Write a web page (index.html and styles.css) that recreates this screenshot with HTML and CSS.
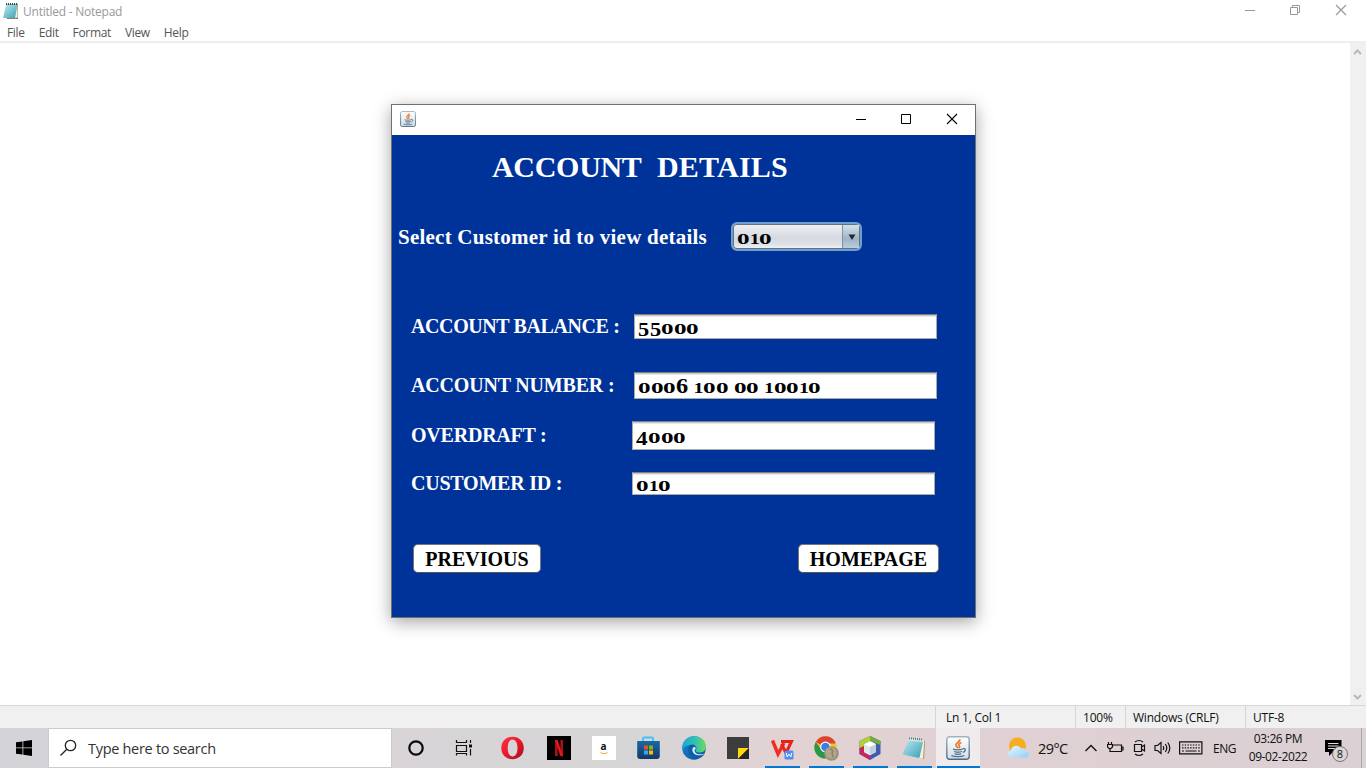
FILE: index.html
```html
<!DOCTYPE html>
<html lang="en">
<head>
<meta charset="utf-8">
<title>Untitled - Notepad</title>
<link rel="stylesheet" href="styles.css">
</head>
<body>
<svg width="0" height="0" class="defs">
  <defs>
    <linearGradient id="btn" x2="0" y2="1"><stop stop-color="#fff"/><stop offset="1" stop-color="#d3dce3"/></linearGradient>
    <linearGradient id="btnEdge" x2="0" y2="1"><stop stop-color="#9db4c6"/><stop offset="1" stop-color="#4a6a85"/></linearGradient>
    <linearGradient id="pad" x1="0" y1="0" x2="1" y2="1"><stop stop-color="#c5edf2"/><stop offset="1" stop-color="#359eb5"/></linearGradient>
    <linearGradient id="opera" x2="1" y2="1"><stop stop-color="#ff3546"/><stop offset=".5" stop-color="#e8192c"/><stop offset="1" stop-color="#a50d1c"/></linearGradient>
    <linearGradient id="bag" x2="0" y2="1"><stop stop-color="#1768ab"/><stop offset="1" stop-color="#173866"/></linearGradient>
    <linearGradient id="edgeTop" x2="1"><stop stop-color="#1aa5dc"/><stop offset=".6" stop-color="#35c5ad"/><stop offset="1" stop-color="#70dc54"/></linearGradient>
    <linearGradient id="edgeLow" x2="1" y2="1"><stop stop-color="#178fd7"/><stop offset="1" stop-color="#0b4c94"/></linearGradient>
    <linearGradient id="cloud" x2="1" y2="1"><stop stop-color="#e8f7ff"/><stop offset="1" stop-color="#91d0f4"/></linearGradient>
    <symbol id="java" viewBox="0 0 24 24">
      <rect x=".8" y=".8" width="22.4" height="22.4" rx="2.6" fill="url(#btn)" stroke="url(#btnEdge)" stroke-width="1.4"/>
      <path d="M13.700 3.300c1 2.500-4.800 3.800-3.600 6.300.4.900 1.500 1.600 1.700 2.700M15.400 6.500c-2.500 1-3.200 2-2.100 3.300.6.800.3 1.600-.4 2.200" fill="none" stroke="#ee792b" stroke-width="1.700"/>
      <path d="M7 13.200c2 .8 7.300.8 9.500 0M8 15.500c2 .8 5.700.8 8 0M8.600 17.700c2 .8 4.600.8 6.600 0M5.400 19.600c3.800 1.500 9.900 1.400 13-.1M16.600 12.700c4-.8 3.200 3 .2 3.600" fill="none" stroke="#50748e" stroke-width="1.300"/>
    </symbol>
    <symbol id="notepad" viewBox="0 0 24 24">
      <path d="M20 4l3 1-1 18-4-1z" fill="#a98d5c"/>
      <path d="M7 2.500 21.500 4 17.500 22 .5 18.500z" fill="url(#pad)"/>
      <path d="M17.500 22 21.500 4l.8.300-1.300 18.500z" fill="#f5f1e5"/>
      <path d="M7 2.500 21.500 4l-.4 2L6.200 4.600z" fill="#d8e9ea"/>
      <path d="M7.500 1.400v2M9.500 1.500v2M11.500 1.700v2M13.500 1.900v2M15.500 2.100v2M17.500 2.300v2M19.500 2.500v2" stroke="#41606b" stroke-width=".8"/>
    </symbol>
  </defs>
</svg>

<main class="notepad">
  <header class="np-title">
    <svg class="np-icon" width="17" height="17" viewBox="0 0 17 17"><path d="M4 2h12v15H5z" fill="#8d8258"/><path d="M4 2.500h11.500L13 16H1z" fill="url(#pad)"/><path d="M13 16l2.500-13.500v13z" fill="#eef3ee"/><path d="M4.500 1v2M6.500 1v2M8.500 1v2M10.500 1v2M12.500 1v2M14.500 1v2" stroke="#33505a"/></svg>
    <span class="np-name">Untitled - Notepad</span>
    <div class="np-controls">
      <svg width="46" height="22"><path d="M19 10.500h10" stroke="#999" fill="none"/></svg>
      <svg width="46" height="22"><path d="M18.500 7.500h7v7h-7zM20.500 7.500v-2h7v7h-2" stroke="#999" fill="none"/></svg>
      <svg width="46" height="22"><path d="M18 5l10 10M28 5l-10 10" stroke="#999" stroke-width="1.200" fill="none"/></svg>
    </div>
  </header>
  <nav class="np-menu"><span>File</span><span>Edit</span><span>Format</span><span>View</span><span>Help</span></nav>
  <section class="np-body">
    <div class="np-page"></div>
    <div class="np-scroll">
      <svg width="16" height="17"><path d="M4 11 7.500 7.500 11 11" stroke="#b8b8b8" stroke-width="2" fill="none"/></svg>
      <svg width="16" height="17"><path d="M4 7l3.500 3.500L11 7" stroke="#b8b8b8" stroke-width="2" fill="none"/></svg>
    </div>
  </section>
  <footer class="np-status">
    <span class="st-pos">Ln 1, Col 1</span><span class="st-zoom">100%</span><span class="st-eol">Windows (CRLF)</span><span class="st-enc">UTF-8</span>
  </footer>
</main>

<section class="dialog">
  <header class="dlg-title">
    <svg class="dlg-icon" width="16" height="16"><use href="#java"/></svg>
    <div class="dlg-controls">
      <svg width="46" height="30"><path d="M19 14.500h10" stroke="#000" fill="none"/></svg>
      <svg width="46" height="30"><path d="M18.500 9.500h9v9h-9z" stroke="#000" fill="none"/></svg>
      <svg width="46" height="30"><path d="M18 9l10 10M28 9 18 19" stroke="#000" stroke-width="1.100" fill="none"/></svg>
    </div>
  </header>
  <div class="dlg-body">
    <h1><span>ACCOUNT</span>&nbsp; DETAILS</h1>
    <div class="pick">
      <label>Select Customer id to view details</label>
      <div class="combo"><div class="value"><i class="d0">0</i><i class="d1">1</i><i class="d0">0</i></div><div class="arrow"><svg width="17" height="25"><path d="M5.500 9.500h7L9 15z" fill="#222a30"/></svg></div></div>
    </div>
    <div class="field f-balance"><label>ACCOUNT BALANCE :</label><div class="input"><div class="value"><i class="d5">5</i><i class="d5">5</i><i class="d0">0</i><i class="d0">0</i><i class="d0">0</i></div></div></div>
    <div class="field f-number"><label>ACCOUNT NUMBER :</label><div class="input"><div class="value"><i class="d0">0</i><i class="d0">0</i><i class="d0">0</i><i class="d6">6</i> <i class="d1">1</i><i class="d0">0</i><i class="d0">0</i> <i class="d0">0</i><i class="d0">0</i> <i class="d1">1</i><i class="d0">0</i><i class="d0">0</i><i class="d1">1</i><i class="d0">0</i></div></div></div>
    <div class="field f-over"><label>OVERDRAFT :</label><div class="input"><div class="value"><i class="d4">4</i><i class="d0">0</i><i class="d0">0</i><i class="d0">0</i></div></div></div>
    <div class="field f-id"><label>CUSTOMER ID :</label><div class="input"><div class="value"><i class="d0">0</i><i class="d1">1</i><i class="d0">0</i></div></div></div>
    <div class="actions"><button class="b-prev">PREVIOUS</button><button class="b-home">HOMEPAGE</button></div>
  </div>
</section>

<footer class="taskbar">
  <div class="start"><svg width="16" height="16"><path d="M0 2.300 6.500 1.400v6.100H0zM7.300 1.300 16 0v7.500H7.300zM0 8.300h6.500v6.300L0 13.700zM7.300 8.300H16V16l-8.700-1.300z"/></svg></div>
  <div class="search">
    <svg width="18" height="18" fill="none" stroke="#222" stroke-width="1.300"><circle cx="10.500" cy="6.500" r="5.200"/><path d="M6.800 10.200.5 16.500"/></svg>
    <span>Type here to search</span>
  </div>
  <div class="apps">
    <div class="app wide"><svg width="24" height="24"><circle cx="12" cy="12" r="6.700" fill="none" stroke="#0a0a0a" stroke-width="2.200"/></svg></div>
    <div class="app wide"><svg width="24" height="24" fill="none" stroke="#111" stroke-width="1.200"><path d="M4.500 4v2.500h10V4M4.500 9.500h10v6h-10zM4.500 19.500V17.500h10v2M18.500 4v3M18.500 13v6.500"/><path d="M17 8.500h3v3h-3z" fill="#111" stroke="none"/></svg></div>
    <div class="app wide"><svg width="24" height="24"><path fill-rule="evenodd" fill="url(#opera)" d="M12.500.8c6.600 0 11.300 4.700 11.300 11.200s-4.700 11.200-11.300 11.200S1.300 18.500 1.300 12 5.900.8 12.500.8zm0 2.700c-3 0-4.800 3.500-4.800 8.500s1.800 8.500 4.800 8.500 5-3.500 5-8.500-2-8.500-5-8.500z"/></svg></div>
    <div class="app mid"><svg width="24" height="24"><path d="M0 0h24v24H0z" fill="#000"/><path d="M8 4h2.700v16L8 20.300zM13.400 4H16v16.300l-2.600-.3z" fill="#a6111a"/><path d="M8 4h2.700L16 20.300l-2.700-.3z" fill="#e31522"/></svg></div>
    <div class="app mid"><div class="amazon">a<svg width="8" height="3"><path d="M.500.500c2 1.500 5 1.500 7 0" fill="none" stroke="#f5a52c"/></svg></div></div>
    <div class="app mid"><svg width="24" height="24"><path d="M6 6V2.500q0-1 1-1h8q1 0 1 1V6" fill="none" stroke="#45c3f5" stroke-width="1.800"/><path d="M.2 5h22.600v15q0 3-3 3H3.200q-3 0-3-3z" fill="url(#bag)"/><path fill="#f25022" d="M7 9.500h4v4H7z"/><path fill="#7fba00" d="M12 9.500h4v4h-4z"/><path fill="#35a9ee" d="M7 14.500h4v4H7z"/><path fill="#ffb900" d="M12 14.500h4v4h-4z"/></svg></div>
    <div class="app mid"><svg class="edge" width="24" height="24"><circle cx="12" cy="12" r="11.800" fill="url(#edgeLow)"/><path d="M.3 11C1 4.500 6 .2 12 .2 19 .2 24 5 24 10.500c0 4-3 6-6.500 6-3 0-4.500-1.200-3.500-2.800 1.200-2 0-5-4-5C5 8.700 1.500 11 .3 14z" fill="url(#edgeTop)"/><path d="M10.500 8.600C5 9 4 18 11.500 22c5 1.500 9-.8 11.300-4.400-3.300 1.600-8.500 1.600-10.300-1-1.400-2-.3-3.500.8-4.500.3-2-1-3.300-2.800-3.500z" fill="#0d60a8"/><path d="M10.800 12c-1.500 3 1 7.300 6 7.200 2.700 0 4.800-.8 6-1.800-2.300 1-7.300 1.500-9.300-.6-1.500-1.600-1-3 .2-4 .3-2-2.200-2.400-2.900-.8z" fill="#e5edf1"/></svg></div>
    <div class="app near"><svg width="22" height="22"><path d="M0 0h22v22H0z" fill="#3c3c3c"/><path d="M11 22V11h11z" fill="#ffda0a"/><path d="M11 22h11V11z" fill="#262626"/></svg></div>
    <div class="app run"><svg width="24" height="24"><path d="M2.500 4.500 8 18l6-11" fill="none" stroke="#f02d20" stroke-width="3.400"/><path d="M11 5.500h10.500L16 17 11.500 8" fill="none" stroke="#e92018" stroke-width="3"/><rect x="14.500" y="14.500" width="9" height="9" rx="1.500" fill="#518df0"/><path d="m16.200 16.800 1 4.200 1.800-3 1.800 3 1-4.200" fill="none" stroke="#fff"/></svg></div>
    <div class="app run"><svg width="26" height="26"><circle cx="12.500" cy="12.500" r="11.200" fill="#f4c426"/><path d="M12.500 12.500 2.800 6.900A11.200 11.200 0 0 1 22.200 6.900L22.500 8.500h-10z" fill="#dc4338"/><path d="M2.800 6.900A11.200 11.200 0 0 0 12.100 23.700L16 15l-8-1z" fill="#27984d"/><circle cx="12.500" cy="12" r="5.400" fill="#fff"/><circle cx="12.500" cy="12" r="4.300" fill="#387fe5"/><circle cx="18.500" cy="18.500" r="7.300" fill="#9b9079"/><circle cx="18" cy="18" r="5.600" fill="#b0a68c"/><path d="M17 14q4 1 2 4l1 4" fill="none" stroke="#8b8168" stroke-width="1.500"/></svg></div>
    <div class="app run"><svg width="24" height="24"><path d="M12 0 1.500 5v13L12 24l10.500-6V5z" fill="#405caf"/><path d="M12 0 1.500 5v8L6 11V8l6-3z" fill="#b2cf36"/><path d="m12 0 10.500 5v4L12 5z" fill="#75ad38"/><path d="M1.500 12 6 10v6l6 3v5L1.500 18z" fill="#c72560"/><path d="M12 5 6 8v8l6 3.200 6-3.200V8z" fill="#fff"/><path d="m6 8 6 3v8.200L6 16z" fill="#dde8e7"/><path d="m18 8-6 3v8.200l6-3.200z" fill="#bfd0dc"/></svg></div>
    <div class="app run"><svg width="24" height="24"><use href="#notepad"/></svg></div>
    <div class="app run active"><svg width="24" height="24"><use href="#java"/></svg></div>
  </div>
  <div class="tray">
    <svg class="weather" width="24" height="24"><circle cx="10.500" cy="10" r="8.500" fill="#f8ad20"/><path d="M5 21.500c-4.500 0-5-6-1-7C4.500 9 12 8 14 12.500c4-1 5.500 1 5 3 4 .500 3.500 6 .3 6z" fill="url(#cloud)"/></svg>
    <span class="temp">29°C</span>
    <svg class="i-up" width="14" height="14" fill="none" stroke="#111" stroke-width="1.300"><path d="M1.500 10 7 4.500l5.500 5.500"/></svg>
    <svg class="i-bat" width="17" height="14" fill="none" stroke="#111" stroke-width="1.200"><path d="M6 4h8.500v6.500H5.500M14.500 6H16v3h-1.500M1.500 1v3M4.500 1v3M.500 3.500h5V6L4 7.500H2L.500 6zM3 7.500v3h3"/></svg>
    <svg class="i-cam" width="14" height="18" fill="none" stroke="#111" stroke-width="1.200"><path d="M1.500 5.500h7v7h-7zM8.500 8 11.500 6v6l-3-2M2 3q4-3 8 0M2 15q4 3 8 0"/></svg>
    <svg class="i-vol" width="18" height="16" fill="none" stroke="#111" stroke-width="1.200"><path d="M1 5.500h2.500L7 2.500v11l-3.500-3H1zM9 6q1.500 2 0 4M11.300 4q3 4 0 8M13.800 2.500q4 5.500 0 11"/></svg>
    <svg class="i-key" width="24" height="14" fill="none" stroke="#111" stroke-width="1.200"><path d="M.6.900h22.300v12H.6z"/><path d="M3 4h18M3 6.900h18" stroke-dasharray="1.500 1.200"/><path d="M3 10h2M6.500 10h11M19 10h2"/></svg>
    <span class="lang">ENG</span>
    <div class="clock"><span>03:26 PM</span><span>09-02-2022</span></div>
    <div class="notif"><svg width="17" height="17"><path d="M0 0h16.500v12H8l-4 4v-4H0z"/><path d="M3 3.500h10.500M3 6h10.500M3 8.500h7" stroke="#e5dcde"/></svg><b>8</b></div>
    <div class="peek"></div>
  </div>
</footer>
</body>
</html>
```
FILE: styles.css
```css
* { box-sizing: border-box; }
body { margin: 0; width: 1366px; height: 768px; overflow: hidden; display: flex; flex-direction: column; background: #fff; font-family: "Open Sans", "Noto Sans", sans-serif; }
svg { display: block; flex: none; }
.defs { position: absolute; }
span, label, button, h1 { white-space: nowrap; }

.notepad { height: 728px; display: flex; flex-direction: column; font-size: 12px; }
.np-title { height: 23px; display: flex; padding-left: 2px; color: #999; }
.np-icon { margin: 2px 4px 0 0; }
.np-name { line-height: 23px; letter-spacing: -.24px; }
.np-controls { display: flex; margin-left: auto; margin-right: 2px; }
.np-menu { height: 20px; display: flex; gap: 14px; padding-left: 7px; line-height: 20px; color: #555; border-bottom: 2px solid #eee; letter-spacing: -.34px; }
.np-body { flex: 1; display: flex; }
.np-page { flex: 1; }
.np-scroll { width: 16px; background: #f0f0f0; display: flex; flex-direction: column; justify-content: space-between; }
.np-status { height: 23px; display: flex; justify-content: flex-end; background: #f0f0f0; border-top: 1px solid #d7d7d7; line-height: 23px; color: #111; letter-spacing: -.22px; }
.np-status span { border-left: 1px solid #d5d5d5; padding-left: 7px; }
.np-status .st-pos { width: 140px; padding-left: 10px; }
.st-zoom { width: 50px; }
.st-eol { width: 120px; }
.st-enc { width: 121px; }

.dialog { position: absolute; left: 391px; top: 104px; width: 585px; height: 514px; border: 1px solid #707070; display: flex; flex-direction: column; box-shadow: 0 4px 16px rgba(0,0,0,.36); font-family: "Liberation Serif", serif; font-weight: bold; font-size: 20px; }
.dlg-title { height: 30px; background: #fff; display: flex; }
.dlg-icon { margin: 6px 0 0 8px; }
.dlg-controls { display: flex; margin-left: auto; }
.dlg-body { flex: 1; background: #003399; color: #fff; display: flex; flex-direction: column; }
h1 { margin: 14px 0 0 100px; height: 36px; line-height: 36px; font-size: 30px; letter-spacing: .2px; }
h1 span { letter-spacing: -.3px; }
.pick { margin: 37px 0 0 6px; height: 29px; display: flex; }
.pick label { width: 333px; font-size: 21px; line-height: 30px; letter-spacing: .23px; }
.combo { width: 131px; height: 29px; border: 2px solid #6f9ed0; border-radius: 6px; background: linear-gradient(#f0f2f5, #d6d9df 55%, #dde1e7 80%, #f2f4f7); display: flex; justify-content: space-between; color: #000; overflow: hidden; padding: 1px 1px 1px 4px; box-shadow: inset 0 0 0 1px #67717b; }
.combo .value { padding-top: 1px; }
.arrow { width: 17px; background: linear-gradient(#d5e2ec, #9eb4c6 60%, #b9cedf); border-left: 1px solid #7c92a5; }
.field { margin-left: 19px; display: flex; align-items: center; }
.field label { width: 223px; letter-spacing: -.4px; }
.input { width: 303px; height: 100%; padding-left: 3px; background: #fff; color: #000; border: 1px solid #aaa; border-top-color: #808080; box-shadow: inset 0 1px #c8c8c8, inset 0 2px #e8e8e8; display: flex; align-items: center; }
.f-balance { height: 25px; margin-top: 63px; }
.f-number { height: 27px; margin-top: 33px; }
.f-over { height: 29px; margin-top: 22px; }
.f-id { height: 23px; margin-top: 22px; }
.f-number label { letter-spacing: -.18px; }
.f-over label, .f-id label { width: 221px; letter-spacing: -.22px; }
.value { white-space: pre; line-height: 22px; height: 22px; }
.value i { display: inline-block; font-style: normal; line-height: 22px; transform-origin: 0 17px; }
.d0 { width: 12.700px; transform: scale(1.260, .74); }
.d1 { width: 9.600px; transform: scale(1, .74); }
.d4 { width: 12px; transform: translateY(2.500px) scale(1.160, .96); }
.d5 { width: 11.500px; transform: translateY(2.500px) scale(1.120, .96); }
.d6 { width: 12.500px; transform: scale(1.220, 1.030); }
.actions { display: flex; justify-content: space-between; margin: 49px 36px 0 21px; }
button { height: 29px; padding: 0; font: bold 20px/26px "Liberation Serif", serif; background: #fff; border: 1px solid #777; border-bottom-color: #555; border-radius: 5px; color: #000; }
.b-prev { width: 128px; }
.b-home { width: 141px; }

.taskbar { height: 40px; display: flex; background: linear-gradient(90deg, #d4d3d7 0, #d8d4d7 390px, #d6d5d6 640px, #e2d2d4 780px, #dfd0d3 1000px, #dbd0d4 100%); color: #111; }
.start { width: 48px; display: flex; align-items: center; justify-content: center; }
.search { width: 344px; border: 1px solid #ccc; background: #fff; display: flex; align-items: center; gap: 10px; padding-left: 11px; font-size: 14.500px; letter-spacing: -.3px; color: #333; }
.apps { display: flex; }
.app { width: 44px; display: flex; align-items: center; justify-content: center; position: relative; }
.wide { width: 48px; }
.mid { width: 45px; }
.run::after { content: ""; position: absolute; left: 5px; right: 4px; bottom: 0; height: 2px; background: #0078d7; }
.active { background: #f0ecee; }
.active::after { left: 1px; right: 0; }
.amazon { width: 24px; height: 24px; background: #fff; display: flex; flex-direction: column; align-items: center; padding-top: 4px; font: bold 10px/12px "Open Sans", sans-serif; }
.tray { flex: 1; display: flex; align-items: center; padding-left: 27px; }
.temp { width: 53px; margin-left: 7px; font-size: 14.500px; letter-spacing: -.6px; }
.i-up { margin-left: -7px; }
.i-bat { margin-left: 9px; }
.i-cam { margin-left: 9px; }
.i-vol { margin-left: 7px; }
.i-key { margin-left: 7px; }
.lang { margin-left: 10px; width: 24px; font-size: 12px; letter-spacing: -.5px; }
.clock { width: 82px; display: flex; flex-direction: column; align-items: center; font-size: 12px; line-height: 18px; letter-spacing: -.4px; height: 36px; }
.notif { position: relative; width: 38px; padding-left: 6px; }
.notif b { position: absolute; left: 13px; top: 6px; width: 16px; height: 16px; border-radius: 50%; border: 1px solid #777; background: #d8d5d6; font: 11px/14px "Open Sans", sans-serif; text-align: center; }
.peek { width: 5px; margin-left: auto; height: 40px; border-left: 1px solid #aaa; }
```
